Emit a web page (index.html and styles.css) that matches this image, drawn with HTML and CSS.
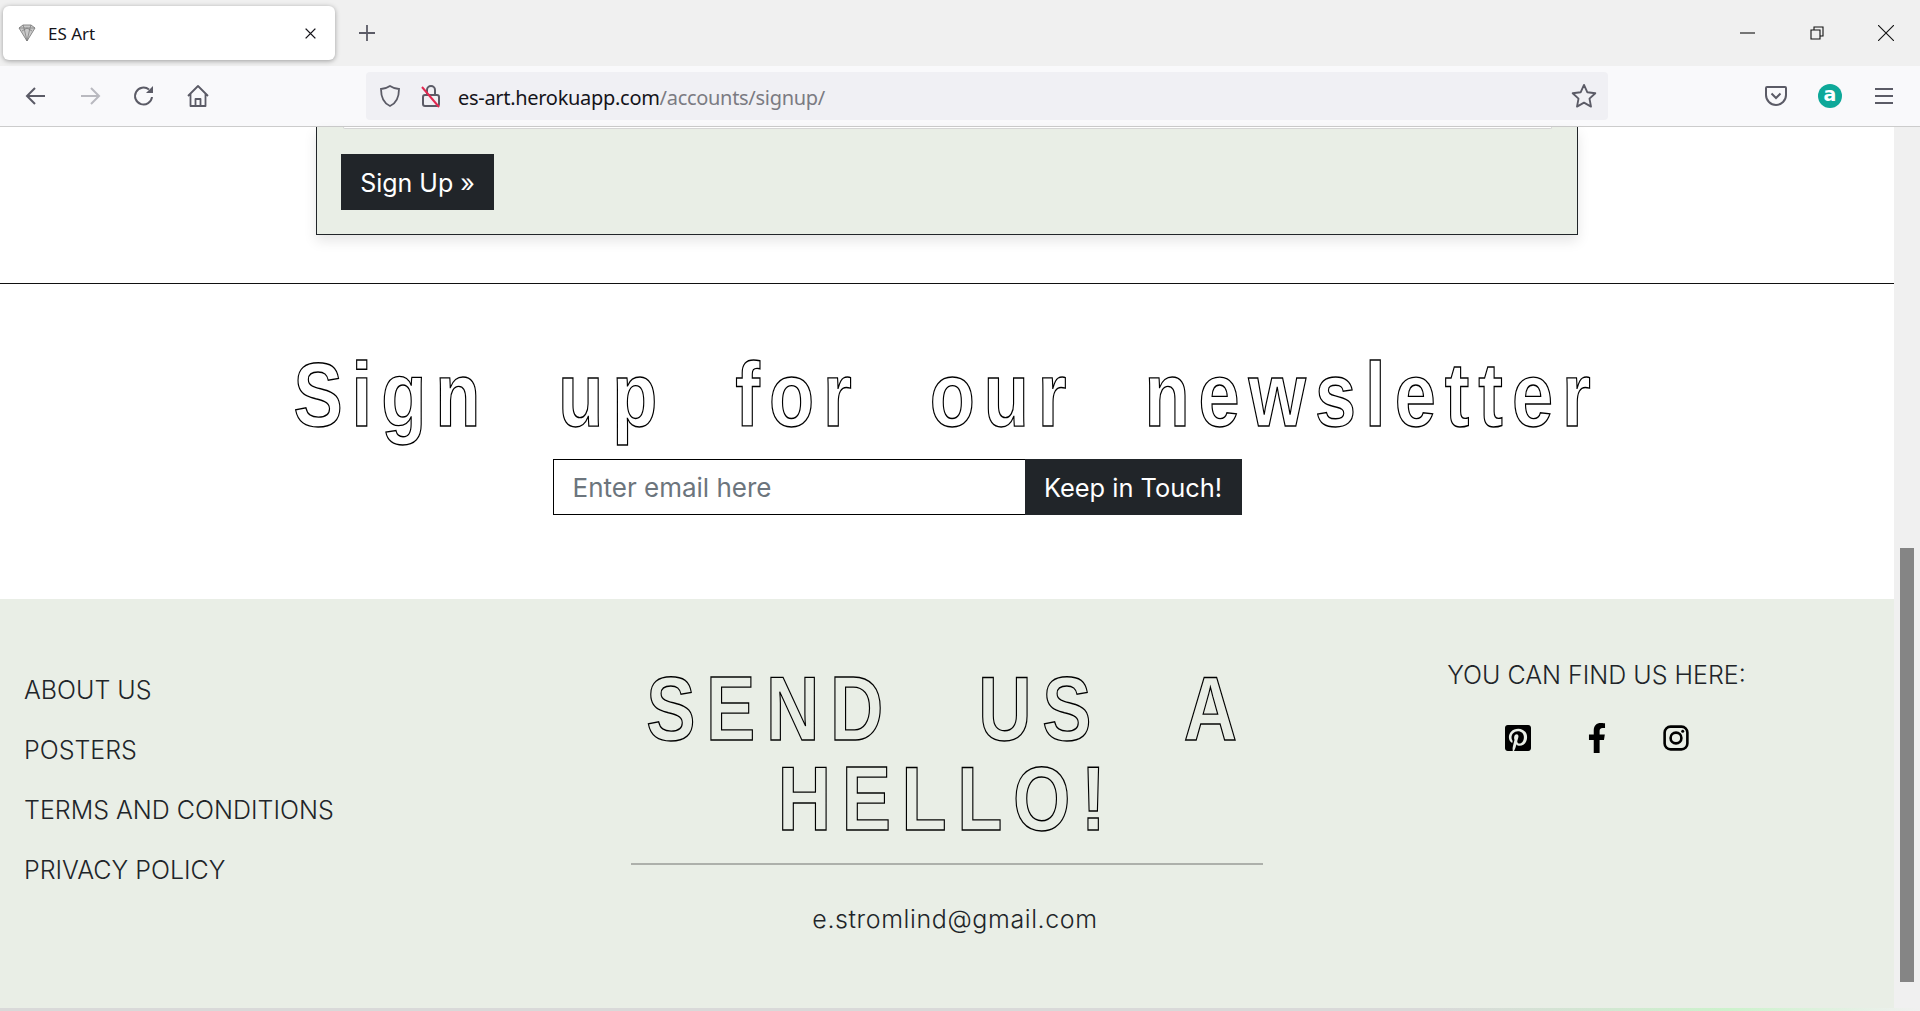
FILE: index.html
```html
<!DOCTYPE html>
<html lang="en">
<head>
  <meta charset="UTF-8">
  <meta name="viewport" content="width=device-width, initial-scale=1.0">
  <title>ES Art</title>
  <link rel="stylesheet" href="styles.css">
</head>
<body>
  <!-- browser chrome -->
  <div class="tabstrip">
    <div class="tab">
      <svg class="favicon" viewBox="0 0 20 20"><path d="M2 5l4-3h8l4 3-8 13z" fill="#c9c9c9" stroke="#8a8a8a"/><path d="M2 5h16M6 2l1 3 3 13 3-13 1-3M5 8l5-3 5 3" fill="none" stroke="#777" stroke-width=".7"/></svg>
      <span class="tab-title">ES Art</span>
      <svg class="tab-close" viewBox="0 0 12 12"><path d="M1.500 1.500l9 9M10.500 1.500l-9 9" stroke="#15141a" stroke-width="1.300"/></svg>
    </div>
    <svg class="new-tab" viewBox="0 0 18 18"><path d="M9 1v16M1 9h16" stroke="#5b5b66" stroke-width="1.800"/></svg>
    <div class="window-controls">
      <svg viewBox="0 0 16 16"><path d="M0 8h15" stroke="#111" stroke-width="1.100"/></svg>
      <svg viewBox="0 0 16 16"><path d="M2 5h9v9H2zM5 5V2h9v9h-3" fill="none" stroke="#111" stroke-width="1.100"/></svg>
      <svg viewBox="0 0 16 16"><path d="M0 0l16 16M16 0L0 16" stroke="#111" stroke-width="1.100"/></svg>
    </div>
  </div>
  <div class="toolbar">
    <div class="nav-buttons">
      <svg viewBox="0 0 24 24"><path d="M21 12H3M11 4l-8 8 8 8" fill="none" stroke="#5b5b66" stroke-width="2"/></svg>
      <svg viewBox="0 0 24 24"><path d="M3 12h18M13 4l8 8-8 8" fill="none" stroke="#b9b9bf" stroke-width="2"/></svg>
      <svg viewBox="0 0 24 24"><path d="M20 13a8.500 8.500 0 1 1-3-7.500" fill="none" stroke="#5b5b66" stroke-width="2"/><path d="M21 2v7h-7z" fill="#5b5b66"/></svg>
      <svg viewBox="0 0 24 24"><path d="M2 12L12 2l10 10M4.500 10v12h15V10M9.500 22v-7h5v7" fill="none" stroke="#5b5b66" stroke-width="1.800" stroke-linejoin="round"/></svg>
    </div>
    <div class="urlbar">
      <svg class="url-icon shield" viewBox="0 0 24 24"><path d="M12 2c3 2 6 3 9 3 0 8-2 14-9 17C5 19 3 13 3 5c3 0 6-1 9-3z" fill="none" stroke="#5b5b66" stroke-width="1.800"/></svg>
      <svg class="url-icon lock" viewBox="0 0 24 24"><rect x="4" y="11" width="16" height="11" rx="2" fill="none" stroke="#5b5b66" stroke-width="2"/><path d="M8 11V6a4 4 0 0 1 8 0v5" fill="none" stroke="#5b5b66" stroke-width="2"/><path d="M3 3l17 20" stroke="#e22850" stroke-width="2"/></svg>
      <span class="url-text">es-art.herokuapp.com<span class="url-path">/accounts/signup/</span></span>
      <svg class="url-star" viewBox="0 0 24 24"><path d="M12 2.500l2.900 6.300 6.800.8-5 4.700 1.300 6.800-6-3.400-6 3.400 1.300-6.800-5-4.700 6.800-.8z" fill="none" stroke="#5b5b66" stroke-width="1.600" stroke-linejoin="round"/></svg>
    </div>
    <div class="toolbar-right">
      <svg viewBox="0 0 24 24"><path d="M3 3h18a1 1 0 0 1 1 1v7a10 10 0 0 1-20 0V4a1 1 0 0 1 1-1z" fill="none" stroke="#5b5b66" stroke-width="2"/><path d="M7.500 9.500l4.500 4.500 4.500-4.500" fill="none" stroke="#5b5b66" stroke-width="2"/></svg>
      <span class="avatar">a</span>
      <svg viewBox="0 0 24 24"><path d="M3 5h18M3 12h18M3 19h18" stroke="#5b5b66" stroke-width="2"/></svg>
    </div>
  </div>

  <div class="viewport">
    <div class="page">
      <div class="signup-wrap">
        <div class="signup-card">
          <div class="input-edge"></div>
          <button class="btn-dark btn-signup">Sign Up »</button>
        </div>
      </div>
      <hr class="page-rule">
      <section class="newsletter">
        <h2 class="fancy">Sign up for our newsletter</h2>
        <form class="newsletter-form">
          <input type="text" placeholder="Enter email here">
          <button type="button" class="btn-dark">Keep in Touch!</button>
        </form>
      </section>
      <footer class="footer">
        <ul class="footer-links">
          <li>ABOUT US</li>
          <li>POSTERS</li>
          <li>TERMS AND CONDITIONS</li>
          <li>PRIVACY POLICY</li>
        </ul>
        <div class="footer-contact">
          <h2 class="fancy">SEND US A<br>HELLO!</h2>
          <hr>
          <p>e.stromlind@gmail.com</p>
        </div>
        <div class="footer-social">
          <p>YOU CAN FIND US HERE:</p>
          <div class="social-icons">
            <svg viewBox="0 0 448 512"><path d="M448 80v352c0 26.500-21.500 48-48 48H154.400c9.800-16.400 22.400-40 27.400-59.300 3-11.500 15.300-58.400 15.300-58.400 8 15.300 31.400 28.200 56.300 28.200 74.100 0 127.400-68.100 127.400-152.700 0-81.100-66.200-141.800-151.400-141.800-106 0-162.200 71.100-162.200 148.600 0 36 19.200 80.800 49.800 95.100 4.700 2.200 7.100 1.200 8.200-3.300.8-3.400 5-20.100 6.800-27.800.6-2.500.3-4.600-1.700-7-10.100-12.300-18.300-34.900-18.300-56 0-54.200 41-106.600 110.900-106.600 60.300 0 102.600 41.100 102.600 99.900 0 66.400-33.500 112.400-77.200 112.400-24.100 0-42.100-19.900-36.400-44.400 6.900-29.200 20.300-60.700 20.300-81.800 0-53-75.500-45.700-75.500 25 0 21.700 7.300 36.500 7.300 36.500-31.400 132.800-36.100 134.500-29.600 192.600l2.200.8H48c-26.500 0-48-21.500-48-48V80c0-26.500 21.500-48 48-48h352c26.500 0 48 21.500 48 48z"/></svg>
            <svg viewBox="0 0 320 512"><path d="M279.140 288l14.220-92.660h-88.910v-60.130c0-25.350 12.420-50.060 52.240-50.060h40.420V6.260S260.430 0 225.360 0c-73.220 0-121.080 44.380-121.080 124.720v70.620H22.890V288h81.390v224h100.170V288z"/></svg>
            <svg viewBox="0 0 24 24"><rect x="1.500" y="1.500" width="21" height="21" rx="5.500" fill="none" stroke="#000" stroke-width="2.400"/><circle cx="12" cy="12" r="5" fill="none" stroke="#000" stroke-width="2.400"/><circle cx="18.200" cy="5.800" r="1.400"/></svg>
          </div>
        </div>
      </footer>
    </div>
    <div class="scrollbar"><div class="scroll-thumb"></div></div>
  </div>
  <div class="window-edge"></div>
</body>
</html>
```

FILE: styles.css
```css
* {
  box-sizing: border-box;
}
html, body {
  height: 100%;
}
body {
  margin: 0;
  overflow: hidden;
  background: #fff;
  color: #212529;
  font-family: Inter, "Open Sans", sans-serif;
}

/* browser chrome */
.tabstrip {
  height: 66px;
  background: #f0f0f0;
  display: flex;
  align-items: center;
}
.tab {
  width: 332px;
  height: 54px;
  margin-left: 3px;
  padding: 0 18px 0 14px;
  background: #fff;
  border-radius: 6px;
  box-shadow: 0 1px 5px rgba(0, 0, 0, 0.35);
  display: flex;
  align-items: center;
  gap: 11px;
}
.favicon {
  width: 20px;
  height: 20px;
}
.tab-title {
  flex: 1;
  font-family: "Noto Sans", sans-serif;
  font-size: 17px;
  color: #15141a;
}
.tab-close {
  width: 13px;
  height: 13px;
}
.new-tab {
  width: 18px;
  height: 18px;
  margin-left: 23px;
}
.window-controls {
  margin-left: auto;
  display: flex;
  align-items: center;
  gap: 53px;
  padding-right: 26px;
}
.window-controls svg {
  width: 16px;
  height: 16px;
}
.toolbar {
  height: 61px;
  background: #f9f9fb;
  border-bottom: 1px solid #ccc;
  display: flex;
  align-items: center;
}
.nav-buttons {
  width: 366px;
  padding-left: 24px;
  display: flex;
  gap: 30px;
}
.nav-buttons svg {
  width: 24px;
  height: 24px;
}
.urlbar {
  width: 1242px;
  height: 48px;
  background: #f0f0f4;
  border-radius: 4px;
  padding: 0 10px 0 12px;
  display: flex;
  align-items: center;
}
.url-icon {
  width: 24px;
  height: 24px;
}
.url-icon.shield {
  margin-right: 17px;
}
.url-icon.lock {
  margin-right: 15px;
}
.url-text {
  flex: 1;
  padding-top: 2px;
  font-family: "Noto Sans", sans-serif;
  font-size: 20px;
  letter-spacing: -0.3px;
  color: #15141a;
}
.url-path {
  color: #7b7b82;
}
.url-star {
  width: 28px;
  height: 28px;
}
.toolbar-right {
  flex: 1;
  padding-left: 156px;
  display: flex;
  align-items: center;
  gap: 30px;
}
.toolbar-right svg {
  width: 24px;
  height: 24px;
}
.avatar {
  width: 24px;
  height: 24px;
  border-radius: 50%;
  background: #0ea899;
  color: #fff;
  font-family: "DejaVu Sans", sans-serif;
  font-weight: 700;
  font-size: 19px;
  line-height: 21px;
  text-align: center;
}

/* page */
.viewport {
  height: 881px;
  display: flex;
}
.page {
  width: 1894px;
}
.scrollbar {
  width: 26px;
  background: #f0f0f0;
  padding: 421px 6px 0;
}
.scroll-thumb {
  height: 434px;
  background: #858585;
}
.window-edge {
  height: 3px;
  background: linear-gradient(90deg, #d9d9d9 75%, #ccf2cc 90%, #f0f0f0);
}
.signup-wrap {
  padding: 0 316px;
}
.signup-card {
  height: 108px;
  background: #e9eee6;
  border: 1px solid #212529;
  border-top: 0;
  padding: 0 24px;
  box-shadow: 0 6px 12px rgba(0, 0, 0, 0.1);
}
.input-edge {
  height: 2px;
  margin: 0 1px 0 2px;
  background: #fff;
  border: 1px solid #d5d5d5;
  border-top: 0;
  border-radius: 0 0 4px 4px;
}
.btn-dark {
  background: #212529;
  color: #fff;
  border: none;
  font-family: Inter, sans-serif;
  cursor: pointer;
}
.btn-signup {
  display: block;
  margin-top: 25px;
  padding-top: 2px;
  width: 153px;
  height: 56px;
  font-size: 25px;
}
.page-rule {
  margin: 48px 0 0;
  border: 0;
  border-top: 1px solid #111;
}
.newsletter {
  height: 315px;
  padding-top: 66px;
  display: flex;
  flex-direction: column;
  align-items: center;
}
/* the site's hand-drawn display face isn't available: bold outline squeezed sideways */
.fancy {
  margin: 0;
  font-family: "Liberation Sans", sans-serif;
  font-weight: 700;
  font-size: 90px;
  line-height: 90px;
  letter-spacing: 11px;
  word-spacing: 48px;
  white-space: nowrap;
  color: #fff;
  -webkit-text-stroke: 1.4px #000;
  transform: scaleX(0.82);
}
.newsletter-form {
  display: flex;
  margin: 19px 100px 0 0;
}
.newsletter-form input {
  width: 472px;
  height: 56px;
  padding: 0 19px;
  border: 1px solid #000;
  border-right: 0;
  font-family: Inter, sans-serif;
  font-size: 26px;
}
.newsletter-form input::placeholder {
  color: #6c757d;
}
.newsletter-form button {
  width: 217px;
  height: 56px;
  font-size: 25.400px;
}

/* footer */
.footer {
  height: 409px;
  background: #e9eee6;
  display: grid;
  grid-template-columns: 631px 632px 631px;
  font-weight: 300;
  font-size: 25px;
}
.footer-links {
  list-style: none;
  margin: 0;
  padding: 61px 0 0 24px;
}
.footer-links li {
  height: 60px;
  line-height: 60px;
}
.footer-contact {
  padding-top: 65px;
  text-align: center;
}
.footer-contact .fancy {
  margin: 0 -100px;
  letter-spacing: 13px;
  word-spacing: 65px;
  color: #e9eee6;
}
.footer-contact hr {
  margin: 19px 0 0;
  border: 0;
  border-top: 2px solid #adb0ab;
}
.footer-contact p {
  margin: 39px 0 0 16px;
  letter-spacing: 0.6px;
}
.footer-social {
  padding: 61px 0 0 36px;
  text-align: center;
}
.footer-social p {
  margin: 0;
}
.social-icons {
  margin-top: 33px;
  display: flex;
  justify-content: center;
  gap: 53px;
}
.social-icons svg {
  width: 26px;
  height: 30px;
}
```
